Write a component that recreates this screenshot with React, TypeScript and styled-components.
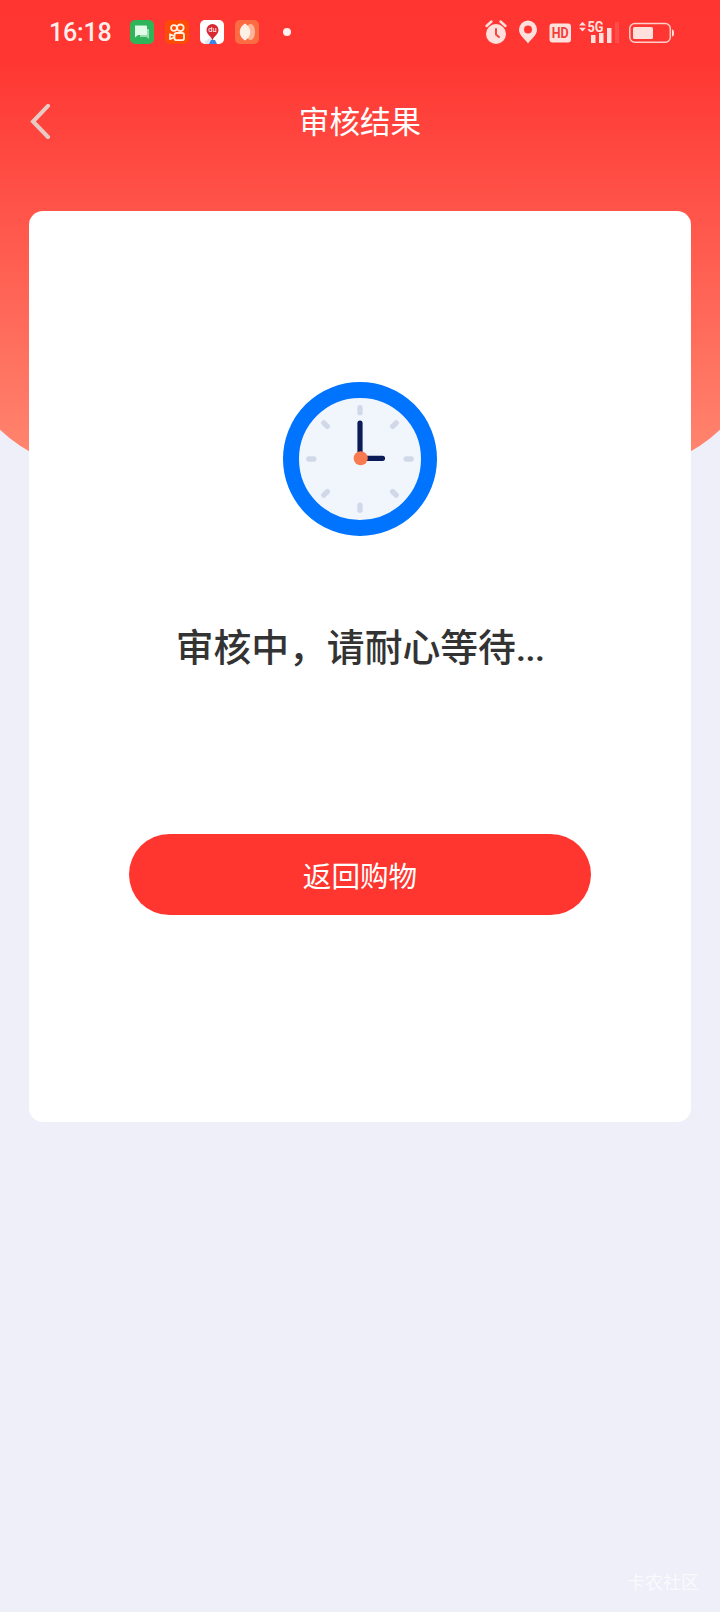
import React from 'react';
import styled, { createGlobalStyle } from 'styled-components';

const GlobalStyle = createGlobalStyle`
  * { box-sizing: border-box; }
  body {
    margin: 0;
    background: #eeeff8;
    font-family: Roboto, 'Noto Sans CJK SC', sans-serif;
  }
`;

const Page = styled.div`
  display: grid;
  grid-template: minmax(1612px, auto) / 100%;
  min-height: 1612px;
  overflow: hidden;
`;

const Backdrop = styled.div`
  grid-area: 1 / 1;
  height: 472px;
  margin: 0 -48px;
  border-radius: 0 0 154px 154px;
  background: linear-gradient(#ff3531 0px, #ff3632 60px, #ff8871 472px);
`;

const Screen = styled.div`
  grid-area: 1 / 1;
  display: flex;
  flex-direction: column;
`;

const StatusBar = styled.div`
  display: flex;
  justify-content: space-between;
  align-items: center;
  height: 64px;
  padding: 0 46px 0 49px;
`;

const StatusGroup = styled.div`
  display: flex;
  align-items: center;
`;

const Time = styled.span`
  width: 81px;
  padding-top: 1px;
  font: 500 25px/30px Roboto, sans-serif;
  letter-spacing: -0.2px;
  color: #ffeeec;
`;

const AppIcon = styled.svg`
  width: 24px;
  height: 24px;
  margin-right: 11px;
`;

const NoticeDot = styled.span`
  width: 8px;
  height: 8px;
  margin-left: 13px;
  border-radius: 50%;
  background: #fff0ee;
`;

const NavBar = styled.header`
  display: grid;
  grid-template-columns: 80px 1fr 80px;
  align-items: center;
  height: 116px;
`;

const BackButton = styled.button`
  display: flex;
  padding: 0 0 3px 29px;
  border: 0;
  background: none;
`;

const Title = styled.h1`
  margin: 0;
  padding-top: 1px;
  font-size: 30.6px;
  font-weight: 400;
  line-height: 40px;
  text-align: center;
  color: #fff;
`;

const Card = styled.main`
  display: flex;
  flex-direction: column;
  align-items: center;
  height: 911px;
  margin: 31px 29px 0;
  padding-top: 171px;
  border-radius: 14px;
  background: #fff;
`;

const Message = styled.p`
  margin: 84px 0 0;
  font-size: 37.8px;
  font-weight: 500;
  line-height: 56px;
  white-space: nowrap;
  color: #333;
`;

const Ellipsis = styled.span`
  letter-spacing: -1px;
`;

const PrimaryButton = styled.button`
  width: 462px;
  height: 81px;
  margin-top: 158px;
  padding: 4px 0 0;
  border: 0;
  border-radius: 41px;
  background: #ff3630;
  font: 400 28.6px/40px Roboto, 'Noto Sans CJK SC', sans-serif;
  color: #fff;
`;

const Watermark = styled.footer`
  margin: auto 21px 16px 0;
  font-size: 18px;
  line-height: 26px;
  text-align: right;
  color: rgba(255, 255, 255, 0.72);
`;

const TICKS = [0, 45, 90, 135, 180, 225, 270, 315];

const Clock = () => (
  <svg width="154" height="154" viewBox="0 0 154 154">
    <circle cx="77" cy="77" r="69" fill="#f1f6fd" stroke="#0074ff" strokeWidth="16" />
    {TICKS.map((angle) => (
      <path
        key={angle}
        d="M77 25.8v5"
        stroke="#d1d9e9"
        strokeWidth="5.4"
        strokeLinecap="round"
        transform={`rotate(${angle} 77 77)`}
      />
    ))}
    <path d="M77 41v35.3h22.5" fill="none" stroke="#0b1c56" strokeWidth="5.2" strokeLinecap="round" />
    <circle cx="77.7" cy="76.3" r="7" fill="#f87a50" />
  </svg>
);

const AppIcons = () => (
  <>
    <AppIcon viewBox="0 0 24 24">
      <rect width="24" height="24" rx="5" fill="#2fb45a" />
      <path d="M10 9h9v10l-2.5-2H10z" fill="#9bdcae" />
      <path d="M5 5.5h11a1 1 0 0 1 1 1V14a1 1 0 0 1-1 1H8l-3 2.5z" fill="#e2fae8" />
    </AppIcon>
    <AppIcon viewBox="0 0 24 24">
      <rect width="24" height="24" rx="5" fill="#ff4a06" />
      <g fill="none" stroke="#fff0df" strokeWidth="1.8" strokeLinejoin="round">
        <circle cx="9" cy="8" r="2.9" />
        <circle cx="15.4" cy="7.8" r="3.3" />
        <rect x="9.500" y="13" width="9.500" height="7.200" rx="2" />
        <path d="M9.500 16.2l-4.500-2v5l4.500-2" />
      </g>
    </AppIcon>
    <AppIcon viewBox="0 0 24 24">
      <rect width="24" height="24" rx="5" fill="#fff" />
      <path d="M4 22l6-4 3 1 4 5H6z" fill="#dbe8ee" />
      <path d="M9 24l2-4h4l2 4z" fill="#3f83e8" />
      <path d="M12.500 20.500c-1-4-6-6-6-10.500a6 6 0 0 1 12 0c0 4.500-5 6.500-6 10.500z" fill="#d92831" />
      <text x="12.500" y="12" fontSize="7.500" textAnchor="middle" fill="#fff" fontFamily="Roboto, sans-serif">du</text>
    </AppIcon>
    <AppIcon viewBox="0 0 24 24">
      <rect width="24" height="24" rx="5" fill="#fc6c43" />
      <ellipse cx="15.500" cy="12" rx="4.500" ry="8" fill="#ffb49a" />
      <path d="M10 3.500c7 4 7 13 0 17-7-4-7-13 0-17z" fill="#fff0e6" />
    </AppIcon>
  </>
);

const SystemIcons = () => (
  <svg width="190" height="26" viewBox="0 0 190 26" fill="#ffe0dd">
    <circle cx="12" cy="15" r="10" />
    <path d="M2.500 7l5-4.500M16.500 2.500l5 4.500" stroke="#ffe0dd" strokeWidth="2.400" strokeLinecap="round" />
    <path d="M12 10v5.500l3 2.500" fill="none" stroke="#f34740" strokeWidth="2" strokeLinecap="round" />
    <path fillRule="evenodd" d="M44 1.500a9 9 0 0 0-9 9c0 6 6 9.500 9 14 3-4.500 9-8 9-14a9 9 0 0 0-9-9zm0 5a4 4 0 1 1 0 8 4 4 0 0 1 0-8z" />
    <rect x="65.500" y="4.500" width="21.500" height="19" rx="3" />
    <text x="76.200" y="19.400" fontSize="15" fontWeight="700" textAnchor="middle" textLength="17" lengthAdjust="spacingAndGlyphs" fill="#f53d37" fontFamily="Roboto, sans-serif">HD</text>
    <path d="M95 6.500l3.500-3.800 3.500 3.800zM95 8.700h7l-3.500 3.800z" />
    <text x="103.500" y="12.800" fontSize="14" fontWeight="700" textLength="16" lengthAdjust="spacingAndGlyphs" fontFamily="Roboto, sans-serif">5G</text>
    <path d="M107 16h4.500v8H107zM115 14h4.500v10H115zM123 9h4.500v15H123z" />
    <path d="M131 3h4v21h-4z" opacity="0.140" />
    <rect x="145.800" y="4.600" width="40.500" height="18.600" rx="5" fill="none" stroke="#ffd0cb" strokeWidth="1.500" />
    <rect x="149" y="8" width="20" height="12" rx="1.500" />
    <path d="M188 10.500q2 0 2 3.500t-2 3.500z" />
  </svg>
);

export default function App() {
  return (
    <>
      <GlobalStyle />
      <Page>
        <Backdrop />
        <Screen>
          <StatusBar>
            <StatusGroup>
              <Time>16:18</Time>
              <AppIcons />
              <NoticeDot />
            </StatusGroup>
            <SystemIcons />
          </StatusBar>
          <NavBar>
            <BackButton aria-label="返回">
              <svg width="24" height="36" viewBox="0 0 24 36" fill="none" stroke="#e8cac5" strokeWidth="4" strokeLinecap="round" strokeLinejoin="miter">
                <path d="M19 2.800L4 18.500l15 15.500" />
              </svg>
            </BackButton>
            <Title>审核结果</Title>
          </NavBar>
          <Card>
            <Clock />
            <Message>
              审核中，请耐心等待<Ellipsis>...</Ellipsis>
            </Message>
            <PrimaryButton>返回购物</PrimaryButton>
          </Card>
          <Watermark>卡农社区</Watermark>
        </Screen>
      </Page>
    </>
  );
}
